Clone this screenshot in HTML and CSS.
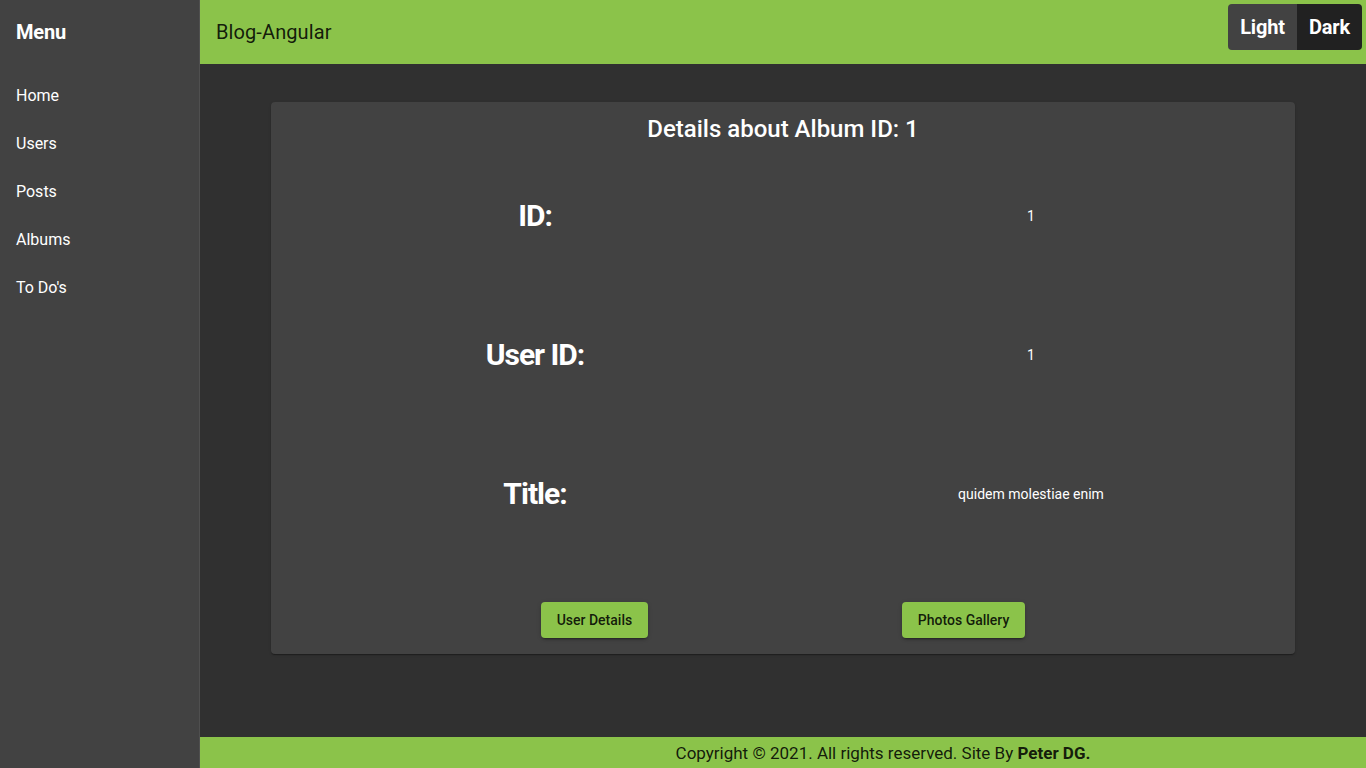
FILE: index.html
```html
<!DOCTYPE html>
<html lang="en">
<head>
<meta charset="utf-8">
<title>Blog-Angular</title>
<link rel="stylesheet" href="styles.css">
</head>
<body>
<div class="app">
  <aside class="sidenav">
    <div class="menu-title">Menu</div>
    <nav class="nav">
      <a class="nav-item">Home</a>
      <a class="nav-item">Users</a>
      <a class="nav-item">Posts</a>
      <a class="nav-item">Albums</a>
      <a class="nav-item">To Do's</a>
    </nav>
  </aside>
  <div class="main">
    <header class="toolbar">
      <span class="brand">Blog-Angular</span>
      <div class="theme-toggle">
        <span class="toggle-btn light">Light</span>
        <span class="toggle-btn dark">Dark</span>
      </div>
    </header>
    <main class="content">
      <section class="card">
        <h2 class="card-title">Details about Album ID: 1</h2>
        <div class="details">
          <div class="label">ID:</div><div class="value">1</div>
          <div class="label">User ID:</div><div class="value">1</div>
          <div class="label">Title:</div><div class="value">quidem molestiae enim</div>
        </div>
        <div class="actions">
          <button class="btn">User Details</button>
          <button class="btn">Photos Gallery</button>
        </div>
      </section>
    </main>
    <footer class="footer"><span>Copyright © 2021. All rights reserved. Site By <b>Peter DG.</b></span></footer>
  </div>
</div>
</body>
</html>
```
FILE: styles.css
```css
* { box-sizing: border-box; }
html, body { margin: 0; height: 100%; }
body {
  font-family: Roboto, "Helvetica Neue", sans-serif;
  background: #303030;
  color: #fff;
}
.app { display: flex; height: 100vh; }
.sidenav {
  width: 200px;
  flex: none;
  background: #424242;
  border-right: 1px solid #4f4f4f;
}
.menu-title {
  height: 64px;
  display: flex;
  align-items: center;
  padding-left: 16px;
  font-size: 20px;
  font-weight: 700;
  letter-spacing: -0.2px;
}
.nav { display: flex; flex-direction: column; padding-top: 7px; }
.nav-item {
  height: 48px;
  display: flex;
  align-items: center;
  padding-left: 16px;
  font-size: 16px;
  color: #fff;
}
.main { flex: 1; display: flex; flex-direction: column; min-width: 0; }
.toolbar {
  height: 64px;
  flex: none;
  background: #8bc34a;
  display: flex;
  align-items: center;
  justify-content: space-between;
  padding-left: 16px;
}
.brand { font-size: 20px; color: rgba(0,0,0,0.87); letter-spacing: 0.1px; }
.theme-toggle {
  align-self: flex-start;
  margin: 4px 4px 0 0;
  display: flex;
  height: 46px;
  border-radius: 4px;
  overflow: hidden;
}
.toggle-btn {
  display: flex;
  align-items: center;
  justify-content: center;
  font-size: 20px;
  font-weight: 700;
  color: #fff;
  letter-spacing: -0.2px;
}
.toggle-btn.light { width: 69px; background: #424242; }
.toggle-btn.dark { width: 65px; background: #212121; }
.content {
  flex: 1;
  padding-top: 38px;
  display: flex;
  justify-content: center;
  align-items: flex-start;
}
.card {
  width: 1024px;
  background: #424242;
  border-radius: 4px;
  padding: 16px;
  box-shadow: 0 2px 1px -1px rgba(0,0,0,.2), 0 1px 1px 0 rgba(0,0,0,.14), 0 1px 3px 0 rgba(0,0,0,.12);
}
.card-title {
  margin: 0 0 6px;
  text-align: center;
  font-size: 24px;
  line-height: 22px;
  font-weight: 500;
}
.details {
  display: grid;
  grid-template-columns: 1fr 1fr;
  grid-auto-rows: 139px;
  align-items: center;
  text-align: center;
}
.label {
  font-size: 30px;
  font-weight: 700;
  letter-spacing: -1px;
}
.value { font-size: 14px; }
.actions {
  margin-top: 39px;
  display: flex;
  justify-content: space-evenly;
}
.btn {
  height: 36px;
  padding: 0 16px;
  border: none;
  border-radius: 4px;
  background: #8bc34a;
  color: rgba(0,0,0,0.87);
  font-family: Roboto, sans-serif;
  font-size: 14px;
  font-weight: 500;
  box-shadow: 0 3px 1px -2px rgba(0,0,0,.2), 0 2px 2px 0 rgba(0,0,0,.14), 0 1px 5px 0 rgba(0,0,0,.12);
}
.footer {
  height: 31px;
  flex: none;
  background: #8bc34a;
  color: rgba(0,0,0,0.87);
  font-size: 17px;
  display: flex;
  align-items: center;
  justify-content: center;
  padding-left: 200px;
}
```
